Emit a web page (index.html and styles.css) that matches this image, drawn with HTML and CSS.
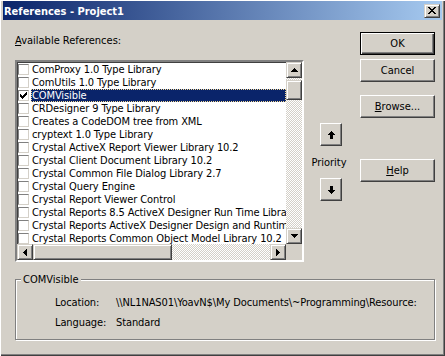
FILE: index.html
```html
<!DOCTYPE html>
<html lang="en">
<head>
    <meta charset="UTF-8">
    <title>References - Project1</title>
    <link rel="stylesheet" href="styles.css">
</head>
<body>
    <div class="window">
        <div class="titlebar">
            <span class="title">References - Project1</span>
            <button class="btn3d close-btn">
                <svg width="8" height="7" viewBox="0 0 8 7"><path d="M0 0h2v1h1v1h2V1h1V0h2v1H7v1H6v1H5v1h1v1h1v1h1v1H6V6H5V5H3v1H2v1H0V6h1V5h1V4h1V3H2V2H1V1H0z"/></svg>
            </button>
        </div>

        <div class="dialog">
            <div class="top">
                <div class="refs">
                    <div class="label"><u>A</u>vailable References:</div>
                    <div class="listbox">
                        <ul class="items">
                            <li><span class="check"></span><span class="name">ComProxy 1.0 Type Library</span></li>
                            <li><span class="check"></span><span class="name">ComUtils 1.0 Type Library</span></li>
                            <li class="selected"><span class="check checked"><svg width="7" height="7" viewBox="0 0 7 7"><path d="M6 0h1v3H6v1H5v1H4v1H3v1H2V6H1V5H0V2h1v1h1v1h1V3h1V2h1V1h1z"/></svg></span><span class="name">COMVisible</span></li>
                            <li><span class="check"></span><span class="name">CRDesigner 9 Type Library</span></li>
                            <li><span class="check"></span><span class="name">Creates a CodeDOM tree from XML</span></li>
                            <li><span class="check"></span><span class="name">cryptext 1.0 Type Library</span></li>
                            <li><span class="check"></span><span class="name">Crystal ActiveX Report Viewer Library 10.2</span></li>
                            <li><span class="check"></span><span class="name">Crystal Client Document Library 10.2</span></li>
                            <li><span class="check"></span><span class="name">Crystal Common File Dialog Library 2.7</span></li>
                            <li><span class="check"></span><span class="name">Crystal Query Engine</span></li>
                            <li><span class="check"></span><span class="name">Crystal Report Viewer Control</span></li>
                            <li><span class="check"></span><span class="name">Crystal Reports 8.5 ActiveX Designer Run Time Library</span></li>
                            <li><span class="check"></span><span class="name">Crystal Reports ActiveX Designer Design and Runtime Library</span></li>
                            <li><span class="check"></span><span class="name">Crystal Reports Common Object Model Library 10.2</span></li>
                        </ul>
                        <div class="vscroll">
                            <div class="btn3d sb-btn"><svg width="7" height="4" viewBox="0 0 7 4"><path d="M3 0h1v1h1v1h1v1h1v1H0V3h1V2h1V1h1z"/></svg></div>
                            <div class="btn3d vthumb"></div>
                            <div class="track"></div>
                            <div class="btn3d sb-btn"><svg width="7" height="4" viewBox="0 0 7 4"><path d="M0 0h7v1H6v1H5v1H4v1H3V3H2V2H1V1H0z"/></svg></div>
                        </div>
                        <div class="hscroll">
                            <div class="btn3d sb-btn"><svg width="4" height="7" viewBox="0 0 4 7"><path d="M3 0h1v7H3V6H2V5H1V4H0V3h1V2h1V1h1z"/></svg></div>
                            <div class="btn3d hthumb"></div>
                            <div class="track"></div>
                            <div class="btn3d sb-btn"><svg width="4" height="7" viewBox="0 0 4 7"><path d="M0 0h1v1h1v1h1v1h1v1H3v1H2v1H1v1H0z"/></svg></div>
                        </div>
                        <div class="corner"></div>
                    </div>
                </div>

                <div class="priority">
                    <button class="btn push arrow-btn"><svg width="7" height="8" viewBox="0 0 7 8"><path d="M3 0h1v1h1v1h1v1h1v1H5v4H2V4H0V3h1V2h1V1h1z"/></svg></button>
                    <span class="priority-label">Priority</span>
                    <button class="btn push arrow-btn"><svg width="7" height="8" viewBox="0 0 7 8"><path d="M2 0h3v4h2v1H6v1H5v1H4v1H3V7H2V6H1V5H0V4h2z"/></svg></button>
                </div>

                <div class="buttons">
                    <button class="btn push default">OK</button>
                    <button class="btn push">Cancel</button>
                    <button class="btn push browse"><u>B</u>rowse...</button>
                    <button class="btn push help"><u>H</u>elp</button>
                </div>
            </div>

            <fieldset class="group">
                <legend>COMVisible</legend>
                <div class="row">
                    <span class="key">Location:</span>
                    <span class="val">\\NL1NAS01\YoavN$\My Documents\~Programming\Resource:</span>
                </div>
                <div class="row">
                    <span class="key">Language:</span>
                    <span class="val">Standard</span>
                </div>
            </fieldset>
        </div>
    </div>
</body>
</html>
```

FILE: styles.css
```css
* {
    margin: 0;
    padding: 0;
    box-sizing: border-box;
}
body {
    font-family: "DejaVu Sans Condensed", "Liberation Sans", sans-serif;
    font-size: 11px;
    line-height: 13px;
    color: #000;
    background-color: #d4d0c8;
    width: 445px;
    height: 356px;
    overflow: hidden;
}
.window {
    width: 445px;
    height: 356px;
    padding: 1px 3px 3px 3px;
    background-color: #d4d0c8;
    box-shadow: inset 1px 1px #fff, inset -1px -1px #404040, inset -2px -2px #808080;
}
.titlebar {
    height: 19px;
    display: flex;
    align-items: center;
    justify-content: space-between;
    padding: 1px 2px 0 1px;
    background: linear-gradient(to right, #0a246a, #a6caf0);
}
.title {
    color: #fff;
    font-weight: bold;
}

/* classic raised bevel */
.btn3d {
    background-color: #d4d0c8;
    border: 1px solid;
    border-color: #d4d0c8 #404040 #404040 #d4d0c8;
    box-shadow: inset 1px 1px #fff, inset -1px -1px #808080;
    display: flex;
    align-items: center;
    justify-content: center;
}
.close-btn {
    width: 16px;
    height: 14px;
    margin-top: -1px;
}
.close-btn svg {
    margin-left: -1px;
}

.top {
    display: flex;
    align-items: flex-start;
}
.refs {
    margin-left: 12px;
    width: 289px;
    padding-top: 14px;
}
.label {
    height: 13px;
}
.listbox {
    margin-top: 13px;
    height: 202px;
    display: grid;
    grid-template-columns: 269px 16px;
    grid-template-rows: 182px 16px;
    border: 2px solid;
    border-color: #808080 #fff #fff #808080;
    box-shadow: inset 1px 1px #404040, inset -1px -1px #d4d0c8;
    background-color: #fff;
}
.items {
    list-style: none;
    overflow: hidden;
    padding-top: 1px;
    letter-spacing: -0.1px;
}
.items li {
    display: flex;
    height: 13px;
    white-space: nowrap;
}
.check {
    flex: none;
    width: 11px;
    height: 11px;
    margin: 1px 0 0 1px;
    border: 1px solid;
    border-color: #808080 #d4d0c8 #d4d0c8 #808080;
    background-color: #fff;
    display: flex;
    align-items: center;
    justify-content: center;
}
.name {
    flex: 1;
    min-width: 0;
    margin-left: 2px;
    padding-left: 1px;
}
.selected .name {
    background-color: #0a246a;
    color: #fff;
    outline: 1px dotted #f5db95;
    outline-offset: -1px;
}
.vscroll {
    grid-column: 2;
    grid-row: 1;
    display: flex;
    flex-direction: column;
    background: repeating-conic-gradient(#d4d0c8 0 25%, #fff 0 50%) 0 0 / 2px 2px;
}
.hscroll {
    grid-column: 1;
    grid-row: 2;
    display: flex;
}
.track {
    flex: 1;
}
.hscroll .track {
    background: repeating-conic-gradient(#d4d0c8 0 25%, #fff 0 50%) 0 0 / 2px 2px;
}
.corner {
    grid-column: 2;
    grid-row: 2;
    background-color: #d4d0c8;
}
.sb-btn {
    width: 16px;
    height: 16px;
    flex: none;
}
.vthumb {
    height: 20px;
    margin-top: 2px;
    flex: none;
}
.hthumb {
    width: 139px;
    height: 16px;
    flex: none;
}

/* push buttons */
.btn {
    font: inherit;
    color: #000;
    cursor: pointer;
}
.push {
    background-color: #d4d0c8;
    border: 1px solid;
    border-color: #fff #404040 #404040 #fff;
    box-shadow: inset -1px -1px #808080;
    display: flex;
    align-items: center;
    justify-content: center;
}
.push.default {
    border-color: #000;
    box-shadow: inset 1px 1px #fff, inset -1px -1px #404040, inset -2px -2px #808080;
}
.priority {
    margin-left: 7px;
    width: 40px;
    padding-top: 103px;
    display: flex;
    flex-direction: column;
    align-items: center;
}
.arrow-btn {
    width: 22px;
    height: 23px;
}
.priority-label {
    margin: 10px 0 9px -4px;
}
.buttons {
    margin-left: 9px;
    width: 75px;
    padding-top: 12px;
    display: flex;
    flex-direction: column;
}
.buttons .btn {
    height: 23px;
    width: 75px;
    margin-bottom: 4px;
}
.buttons .browse {
    margin-top: 9px;
}
.buttons .help {
    margin-top: 37px;
}

/* group box */
.group {
    margin: 11px 7px 0 12px;
    min-inline-size: 0;
    border: 1px solid #808080;
    box-shadow: inset 1px 1px #fff, 1px 1px #fff;
    padding: 10px 0 10px 0;
}
.group legend {
    margin-left: 5px;
    padding: 0 2px;
    background-color: #d4d0c8;
    line-height: 13px;
}
.row {
    display: flex;
    padding-left: 39px;
    height: 13px;
    white-space: nowrap;
    letter-spacing: -0.1px;
}
.row + .row {
    margin-top: 7px;
}
.key {
    width: 61px;
    flex: none;
}
```
